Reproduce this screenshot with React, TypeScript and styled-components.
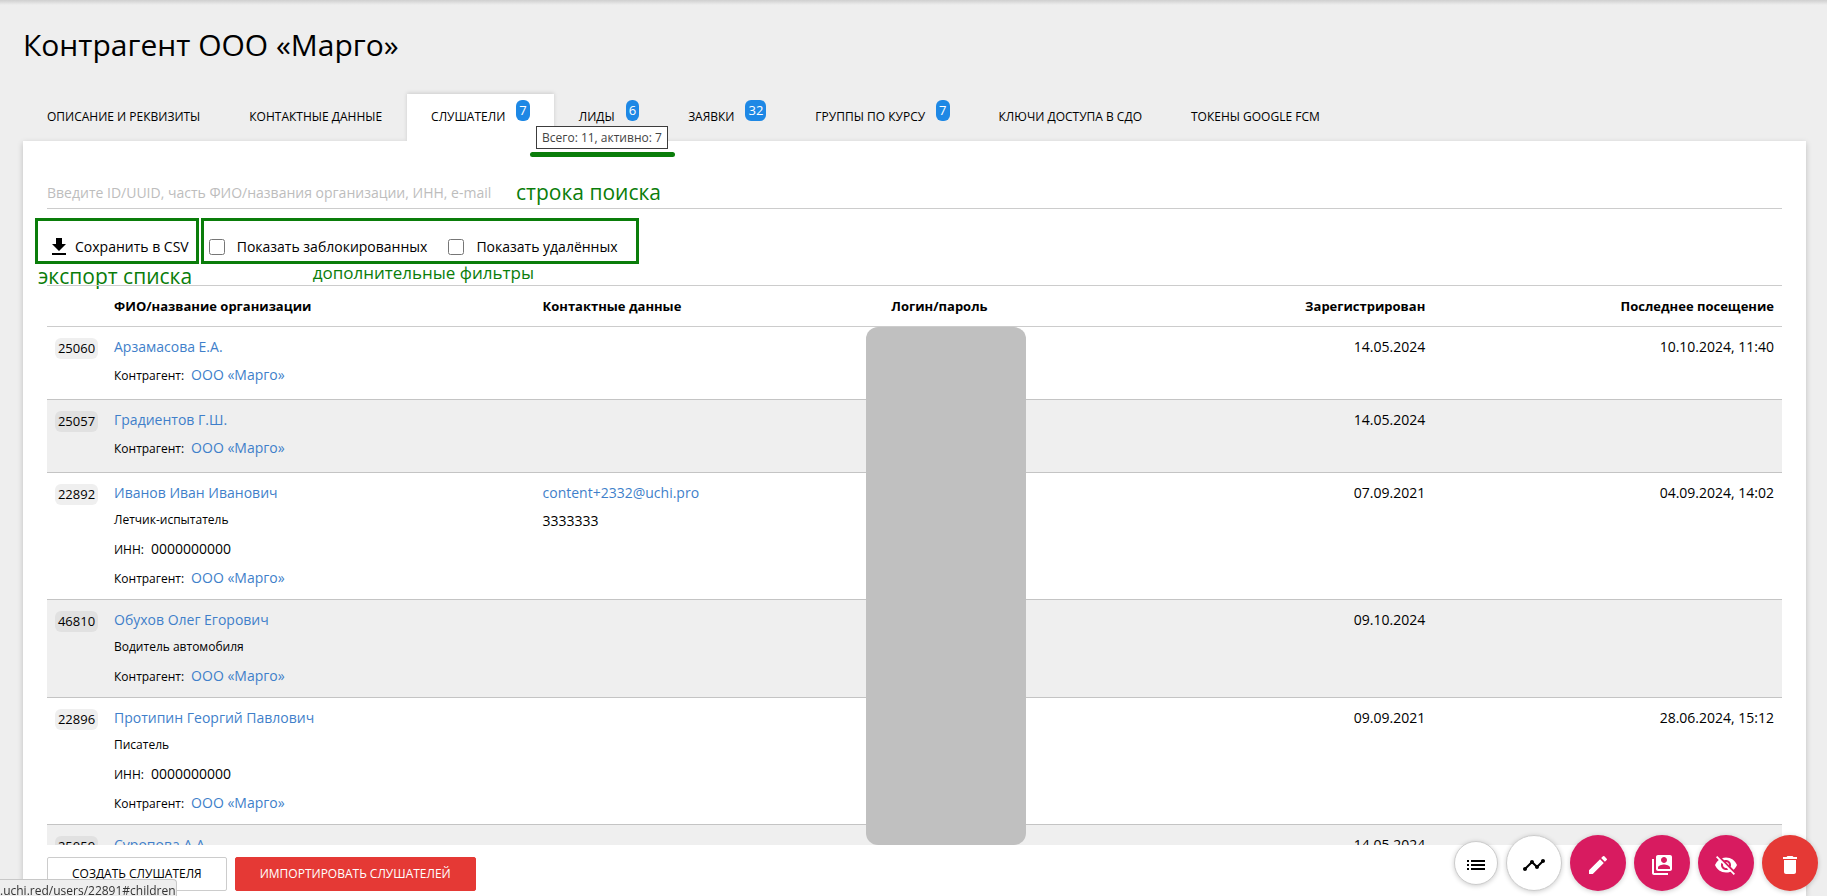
import React from "react";
import styled, { createGlobalStyle, css } from "styled-components";
import {
  MdDelete,
  MdEdit,
  MdList,
  MdSwitchAccount,
  MdTimeline,
  MdVisibilityOff,
} from "react-icons/md";

const green = "#0a7d0a";
const line = "#cccccc";

const GlobalStyle = createGlobalStyle`
  *, *::before, *::after { box-sizing: border-box; }
  body {
    margin: 0;
    background: #eeeeee;
    color: #000;
    font-family: "Open Sans", "Noto Sans", sans-serif;
    font-size: 14px;
  }
  button, input { font: inherit; color: inherit; }
`;

const Page = styled.div`
  display: flex;
  flex-direction: column;
  height: 100vh;
  padding: 0 21px 0 23px;
  overflow: hidden;
  background: linear-gradient(#cfcfcf, #eeeeee 5px);
`;

const Title = styled.h1`
  margin: 25px 0 29px;
  font-size: 30px;
  line-height: 40px;
  font-weight: 400;
`;

const Tabs = styled.nav`
  display: flex;
  flex: none;
  gap: 1px;
`;

const Tab = styled.a<{ $active?: boolean }>`
  position: relative;
  display: flex;
  align-items: center;
  height: 47px;
  padding: 0 24px 2px;
  font-size: 12px;
  text-transform: uppercase;
  text-decoration: none;
  white-space: nowrap;
  color: #000;
  ${(p) =>
    p.$active &&
    css`
      background: #fff;
      box-shadow: 0 -1px 4px rgba(0, 0, 0, 0.14);
      clip-path: inset(-6px -6px 0 -6px);
    `}
`;

const Badge = styled.span`
  align-self: flex-start;
  margin: 6px 0 0 11px;
  padding: 0 3px;
  border-radius: 6px;
  background: #1e88e5;
  color: #fff;
  font-size: 13px;
  line-height: 21px;
`;

const TabsArea = styled.div`
  position: relative;
`;

const Tooltip = styled.div`
  position: absolute;
  z-index: 2;
  left: 513px;
  top: 32px;
  padding: 0 5px;
  border: 1px solid #3c3c3c;
  background: #fff;
  color: #444;
  font-size: 12px;
  line-height: 21px;
  white-space: nowrap;
`;

const Underline = styled.div`
  position: absolute;
  z-index: 2;
  left: 507px;
  top: 58px;
  width: 145px;
  height: 5px;
  border-radius: 3px;
  background: ${green};
`;

const Panel = styled.main`
  display: flex;
  flex-direction: column;
  flex: 1;
  min-height: 0;
  padding: 36px 24px 0;
  background: #fff;
  box-shadow: 0 2px 6px rgba(0, 0, 0, 0.2);
`;

const SearchRow = styled.div`
  position: relative;
  display: flex;
  flex: none;
  height: 32px;
  border-bottom: 1px solid ${line};
`;

const SearchInput = styled.input`
  flex: 1;
  padding: 0;
  border: 0;
  outline: 0;
  background: transparent;
  &::placeholder {
    color: #bdbdbd;
    opacity: 1;
  }
`;

const Note = styled.span<{ $left: number; $top: number; $size: number }>`
  position: absolute;
  left: ${(p) => p.$left}px;
  top: ${(p) => p.$top}px;
  color: ${green};
  font-size: ${(p) => p.$size}px;
  line-height: 24px;
  white-space: nowrap;
`;

const Toolbar = styled.div`
  display: flex;
  flex: none;
  gap: 2px;
  margin: 9px 0 21px -12px;
`;

const Framed = styled.div`
  position: relative;
  display: flex;
  align-items: flex-end;
  height: 46px;
  padding: 0 18px 2px 5px;
  border: 3px solid ${green};
`;

const ExportFrame = styled(Framed)`
  padding: 0 7px 2px 9px;
`;

const ExportButton = styled.button`
  display: flex;
  align-items: center;
  gap: 4px;
  padding: 0;
  border: 0;
  background: none;
  line-height: 24px;
  white-space: nowrap;
`;

const Check = styled.label`
  display: flex;
  align-items: center;
  gap: 12px;
  margin-right: 21px;
  line-height: 24px;
  white-space: nowrap;
  &:last-of-type { margin-right: 0; }
`;

const CheckInput = styled.input`
  width: 16px;
  height: 16px;
  margin: 0;
`;

const List = styled.div`
  position: relative;
  flex: 1;
  min-height: 0;
  overflow: hidden;
`;

const Table = styled.table`
  width: 100%;
  table-layout: fixed;
  border-collapse: separate;
  border-spacing: 0;
  border-top: 1px solid ${line};
`;

const Th = styled.th<{ $right?: boolean }>`
  height: 41px;
  padding: 0 8px 1px;
  border-bottom: 1px solid ${line};
  font-size: 13px;
  font-weight: 700;
  text-align: ${(p) => (p.$right ? "right" : "left")};
`;

const Td = styled.td<{ $right?: boolean }>`
  height: 73px;
  padding: 7px 8px;
  border-bottom: 1px solid #c4c4c4;
  vertical-align: top;
  line-height: 26px;
  text-align: ${(p) => (p.$right ? "right" : "left")};
`;

const IdTag = styled.span`
  display: block;
  width: 43px;
  margin-top: 4px;
  border-radius: 6px;
  background: #efefef;
  font-size: 13px;
  line-height: 21px;
  text-align: center;
`;

const Row = styled.tr`
  &:nth-child(even) { background: #efefef; }
  &:nth-child(even) ${IdTag} { background: #e1e1e1; }
`;

const Link = styled.a`
  color: #3f7fca;
  text-decoration: none;
`;

const Job = styled.div`
  font-size: 12px;
  line-height: 28px;
`;

const Detail = styled.div`
  display: flex;
  align-items: baseline;
  gap: 7px;
  height: 29px;
  line-height: 29px;
`;

const DetailLabel = styled.span`
  font-size: 12px;
`;

const Redaction = styled.div`
  position: absolute;
  top: 42px;
  bottom: 0;
  left: 47.2%;
  width: 160px;
  border-radius: 12px;
  background: #c0c0c0;
`;

const Footer = styled.footer`
  display: flex;
  flex: none;
  gap: 8px;
  padding: 12px 0 5px;
`;

const FootButton = styled.button<{ $primary?: boolean }>`
  height: 34px;
  padding: 0 24px 2px;
  border: 1px solid ${(p) => (p.$primary ? "#e53935" : line)};
  border-radius: 2px;
  background: ${(p) => (p.$primary ? "#e53935" : "#fff")};
  color: ${(p) => (p.$primary ? "#fff" : "#000")};
  font-size: 12px;
  font-weight: ${(p) => (p.$primary ? 500 : 400)};
  text-transform: uppercase;
`;

const Fabs = styled.div`
  position: fixed;
  right: 9px;
  bottom: 5px;
  display: flex;
  align-items: center;
  gap: 8px;
`;

const Fab = styled.button<{ $color?: string; $small?: boolean }>`
  display: flex;
  align-items: center;
  justify-content: center;
  width: ${(p) => (p.$small ? 44 : 56)}px;
  height: ${(p) => (p.$small ? 44 : 56)}px;
  padding: 3px 0 0;
  border: ${(p) => (p.$color ? "0" : "1px solid #cccccc")};
  border-radius: 50%;
  background: ${(p) => p.$color || "#fff"};
  color: ${(p) => (p.$color ? "#fff" : "#000")};
  box-shadow: 0 1px 5px rgba(0, 0, 0, 0.2);
`;

const StatusBar = styled.div`
  position: fixed;
  left: 0;
  bottom: 0;
  height: 17px;
  overflow: hidden;
  border: 1px solid #c8c8c8;
  border-width: 1px 1px 0 0;
  border-radius: 0 4px 0 0;
  background: #eeeeee;
  color: #333;
  font-size: 12px;
  line-height: 22px;
`;

const tabs: { label: string; count?: number; active?: boolean }[] = [
  { label: "Описание и реквизиты" },
  { label: "Контактные данные" },
  { label: "Слушатели", count: 7, active: true },
  { label: "Лиды", count: 6 },
  { label: "Заявки", count: 32 },
  { label: "Группы по курсу", count: 7 },
  { label: "Ключи доступа в СДО" },
  { label: "Токены Google FCM" },
];

interface Person {
  id: number;
  name: string;
  job?: string;
  inn?: string;
  email?: string;
  phone?: string;
  registered: string;
  visited?: string;
}

const people: Person[] = [
  { id: 25060, name: "Арзамасова Е.А.", registered: "14.05.2024", visited: "10.10.2024, 11:40" },
  { id: 25057, name: "Градиентов Г.Ш.", registered: "14.05.2024" },
  {
    id: 22892,
    name: "Иванов Иван Иванович",
    job: "Летчик-испытатель",
    inn: "0000000000",
    email: "content+2332@uchi.pro",
    phone: "3333333",
    registered: "07.09.2021",
    visited: "04.09.2024, 14:02",
  },
  { id: 46810, name: "Обухов Олег Егорович", job: "Водитель автомобиля", registered: "09.10.2024" },
  {
    id: 22896,
    name: "Протипин Георгий Павлович",
    job: "Писатель",
    inn: "0000000000",
    registered: "09.09.2021",
    visited: "28.06.2024, 15:12",
  },
  { id: 25059, name: "Суропова А.А.", registered: "14.05.2024" },
];

export default function App() {
  return (
    <>
      <GlobalStyle />
      <Page>
        <Title>Контрагент ООО «Марго»</Title>
        <TabsArea>
          <Tabs>
            {tabs.map((t) => (
              <Tab key={t.label} href="#children" $active={t.active}>
                {t.label}
                {t.count !== undefined && <Badge>{t.count}</Badge>}
              </Tab>
            ))}
          </Tabs>
          <Tooltip role="tooltip">Всего: 11, активно: 7</Tooltip>
          <Underline />
        </TabsArea>
        <Panel>
          <SearchRow>
            <SearchInput
              aria-label="Поиск"
              placeholder="Введите ID/UUID, часть ФИО/названия организации, ИНН, e-mail"
            />
            <Note $left={469} $top={3} $size={21}>строка поиска</Note>
          </SearchRow>
          <Toolbar>
            <ExportFrame>
              <ExportButton type="button">
                <svg width="24" height="24" viewBox="0 0 24 24" aria-hidden="true">
                  <path d="M19 9h-4V3H9v6H5l7 7 7-7zM5 18v2h14v-2H5z" />
                </svg>
                Сохранить в CSV
              </ExportButton>
              <Note $left={0} $top={43} $size={21}>экспорт списка</Note>
            </ExportFrame>
            <Framed>
              <Check>
                <CheckInput type="checkbox" />
                Показать заблокированных
              </Check>
              <Check>
                <CheckInput type="checkbox" />
                Показать удалённых
              </Check>
              <Note $left={109} $top={40} $size={17}>дополнительные фильтры</Note>
            </Framed>
          </Toolbar>
          <List>
            <Table>
              <colgroup>
                <col style={{ width: 59 }} />
                <col style={{ width: "24.7%" }} />
                <col style={{ width: "20.1%" }} />
                <col style={{ width: "11.6%" }} />
                <col style={{ width: "20.1%" }} />
                <col />
              </colgroup>
              <thead>
                <tr>
                  <Th />
                  <Th>ФИО/название организации</Th>
                  <Th>Контактные данные</Th>
                  <Th>Логин/пароль</Th>
                  <Th $right>Зарегистрирован</Th>
                  <Th $right>Последнее посещение</Th>
                </tr>
              </thead>
              <tbody>
                {people.map((p) => (
                  <Row key={p.id}>
                    <Td><IdTag>{p.id}</IdTag></Td>
                    <Td>
                      <Link href="#user">{p.name}</Link>
                      {p.job && <Job>{p.job}</Job>}
                      {p.inn && <Detail><DetailLabel>ИНН:</DetailLabel>{p.inn}</Detail>}
                      <Detail>
                        <DetailLabel>Контрагент:</DetailLabel>
                        <Link href="#company">ООО «Марго»</Link>
                      </Detail>
                    </Td>
                    <Td>
                      {p.email && <Link href={`mailto:${p.email}`}>{p.email}</Link>}
                      {p.phone && <Detail>{p.phone}</Detail>}
                    </Td>
                    <Td />
                    <Td $right>{p.registered}</Td>
                    <Td $right>{p.visited}</Td>
                  </Row>
                ))}
              </tbody>
            </Table>
            <Redaction />
          </List>
          <Footer>
            <FootButton type="button">Создать слушателя</FootButton>
            <FootButton type="button" $primary>Импортировать слушателей</FootButton>
          </Footer>
        </Panel>
      </Page>
      <Fabs>
        <Fab type="button" aria-label="Список" $small><MdList size={24} /></Fab>
        <Fab type="button" aria-label="Статистика"><MdTimeline size={24} /></Fab>
        <Fab type="button" aria-label="Изменить" $color="#d81b60"><MdEdit size={24} /></Fab>
        <Fab type="button" aria-label="Сменить пользователя" $color="#d81b60"><MdSwitchAccount size={24} /></Fab>
        <Fab type="button" aria-label="Скрыть" $color="#d81b60"><MdVisibilityOff size={24} /></Fab>
        <Fab type="button" aria-label="Удалить" $color="#e53935"><MdDelete size={24} /></Fab>
      </Fabs>
      <StatusBar>.uchi.red/users/22891#children</StatusBar>
    </>
  );
}
